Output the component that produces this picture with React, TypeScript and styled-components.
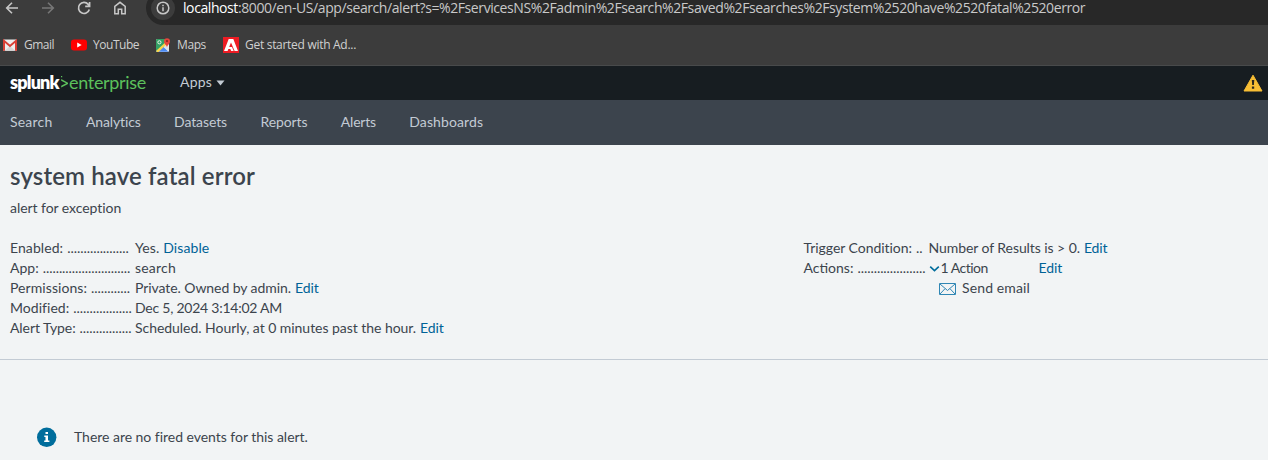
import React from 'react';
import styled, { createGlobalStyle } from 'styled-components';

const GlobalStyle = createGlobalStyle`
  * { box-sizing: border-box; }
  body {
    margin: 0;
    background: #f2f4f5;
    color: #3c444d;
    font: 14px/20px Lato, sans-serif;
  }
`;

/* Text with its own tracking, in hundredths of a pixel */
const Text = styled.span<{ $track?: number }>`
  letter-spacing: ${(p) => (p.$track ?? 0) / 100}px;
  white-space: pre;
`;

/* Header text sits slightly above the optical centre of its bar */
const RaisedText = styled(Text)`
  padding-bottom: 2px;
`;

const Page = styled.div`
  width: 1268px;
  height: 460px;
  overflow: hidden;
`;

/* Browser chrome */
const BrowserBar = styled.div`
  height: 66px;
  background: #3c3c3c;
  border-bottom: 1px solid #484a4b;
  font-family: 'Open Sans', sans-serif;
`;

const Toolbar = styled.div`
  display: flex;
  align-items: flex-end;
  height: 25px;
`;

const ToolButtons = styled.div`
  display: flex;
  flex: none;
  align-items: center;
  gap: 20px;
  width: 146px;
  height: 34px;
  padding-left: 4px;
`;

const AddressBar = styled.div`
  display: flex;
  flex: 1;
  align-items: center;
  height: 34px;
  padding-left: 5px;
  background: #282828;
  border-radius: 17px 0 0 17px;
`;

const SiteInfo = styled.div`
  display: flex;
  align-items: center;
  justify-content: center;
  flex: none;
  width: 24px;
  height: 24px;
  margin-right: 8px;
  background: #3c3c3c;
  border-radius: 50%;
`;

const Url = styled(Text)`
  color: #c9c9c9;
  font-size: 14px;
  line-height: 16px;
`;

const Host = styled.span`
  color: #fff;
`;

const Bookmarks = styled.div`
  display: flex;
  height: 40px;
  padding-left: 2px;
`;

const Bookmark = styled.div<{ $width: number }>`
  display: flex;
  align-items: center;
  flex: none;
  gap: 6px;
  width: ${(p) => p.$width}px;
  color: #d0d0d0;
  font-size: 12px;
`;

/* Splunk header */
const AppHeader = styled.header`
  display: flex;
  align-items: center;
  height: 34px;
  padding: 0 5px 0 10px;
  background: #171d21;
  color: #c3cbd4;
`;

const Logo = styled.div`
  display: flex;
  align-items: center;
  width: 170px;
  font-size: 18px;
  color: #5cc05c;
`;

const Brand = styled(RaisedText)`
  width: 50px;
  color: #fff;
  font-weight: 800;
`;

const AppsMenu = styled.div`
  display: flex;
  align-items: center;
  flex: 1;
  gap: 4px;
`;

const Nav = styled.nav`
  display: flex;
  align-items: center;
  gap: 33.4px;
  height: 45px;
  padding-left: 10px;
  background: #3c444d;
  color: #c3cbd4;
`;

/* Alert details */
const Summary = styled.section`
  height: 215px;
  padding: 16px 10px 0;
  border-bottom: 1px solid #c3cbd4;
`;

const Title = styled.h1`
  margin: 0;
  font-size: 24px;
  font-weight: 600;
  line-height: 30px;
  letter-spacing: 0.127px;
`;

const Description = styled.p`
  margin: 7px 0 20px;
  letter-spacing: -0.05px;
`;

const Columns = styled.div`
  display: grid;
  grid-template-columns: 793.5px 1fr;
`;

const Row = styled.div`
  display: flex;
  height: 20px;
  white-space: pre;
`;

const Label = styled.div`
  display: flex;
  flex: none;
  gap: 4px;
  width: 125px;
`;

const Dots = styled.span`
  letter-spacing: -0.06px;
`;

const Link = styled(Text)`
  margin-left: 4px;
  color: #006297;
`;

const ActionToggle = styled.div`
  display: flex;
  align-items: center;
  gap: 1px;
  width: 106px;

  svg {
    margin-top: 2px;
  }
`;

const ActionItem = styled.div`
  display: flex;
  align-items: center;
  gap: 6px;
  height: 20px;
  padding-left: 135.5px;

  svg {
    margin-top: 2px;
  }
`;

const EmptyMessage = styled.div`
  display: flex;
  align-items: center;
  gap: 17px;
  padding: 67px 0 0 37px;
`;

const strokeProps = { fill: 'none', stroke: '#c7c7c7', strokeWidth: 1.6 };

const BackIcon = () => (
  <svg width="16" height="16" viewBox="0 0 16 16" {...strokeProps}>
    <path d="M14 8H2.8M8 2.7 2.7 8 8 13.3" />
  </svg>
);

const ForwardIcon = () => (
  <svg width="16" height="16" viewBox="0 0 16 16" {...strokeProps} stroke="#777">
    <path d="M2 8h11.2M8 2.7 13.3 8 8 13.3" />
  </svg>
);

const ReloadIcon = () => (
  <svg width="16" height="16" viewBox="0 0 16 16" {...strokeProps} strokeWidth={1.7}>
    <path d="M13.3 9.5A5.5 5.5 0 1 1 12.2 4.4L13.5 6M13.6 2v4.4H9.2" />
  </svg>
);

const HomeIcon = () => (
  <svg width="16" height="16" viewBox="0 0 16 16" {...strokeProps} strokeWidth={1.5}>
    <path d="M2.8 6.3 8 2.3l5.2 4v7.500H9.700V9.200H6.300v4.600H2.800z" />
  </svg>
);

const SiteInfoIcon = () => (
  <svg width="14" height="14" viewBox="0 0 14 14" {...strokeProps} strokeWidth={1.5}>
    <circle cx="7" cy="7" r="5.8" />
    <path d="M7 6.3v4M7 3.7v1.500" />
  </svg>
);

const GmailIcon = () => (
  <svg width="16" height="16" viewBox="0 0 16 16">
    <rect x="1" y="2.5" width="14" height="11.2" rx="1" fill="#eee" />
    <path d="M3 13.7 8 9l5 4.7z" fill="#d6d6d6" />
    <path d="M2 13.7V3.8l6 5.1 6-5.1v9.9" fill="none" stroke="#d93f35" strokeWidth="2" />
  </svg>
);

const YouTubeIcon = () => (
  <svg width="16" height="16" viewBox="0 0 16 16">
    <rect y="2.4" width="16" height="11.2" rx="3" fill="#f00" />
    <path d="m6.2 5.4 4.5 2.6-4.5 2.6z" fill="#fff" />
  </svg>
);

const MapsIcon = () => (
  <svg width="16" height="16" viewBox="0 0 16 16">
    <rect x="1" y="2" width="13" height="13" rx="1.5" fill="#e8eaed" />
    <path d="M1 3.5C1 2.7 1.7 2 2.5 2H10l1 4-9.6 8.5-.4-1z" fill="#34a064" />
    <path d="m2 14.8 6-5.4 5.5 5.4z" fill="#4a89f3" />
    <path d="m8 9.2 2.4-2.3L14 11v3z" fill="#dfe2e5" />
    <path d="m1.2 13.8 9-8.2 1.4 1.6-8 7.7H2z" fill="#f8d34a" />
    <circle cx="4.4" cy="5.3" r="1.6" fill="none" stroke="#e8f5e9" />
    <path d="M12 10.3c-.4-2.4-3-3.2-3-6a3 3 0 0 1 6 0c0 2.8-2.6 3.6-3 6z" fill="#e5453b" />
    <circle cx="12" cy="4.1" r="1.1" fill="#8c251f" />
  </svg>
);

const AdobeIcon = () => (
  <svg width="16" height="16" viewBox="0 0 16 16">
    <path d="M0 0h16v16H0z" fill="#ed1c24" />
    <path d="M5.700 2h4.600L15 14h-3.400L8 5.600 6.200 9.900H9l1.700 4.100H8.200l-.9-2H5.400l-.8 2H1z" fill="#fff" />
  </svg>
);

const PromptIcon = () => (
  <svg width="9" height="16" viewBox="0 0 9 16">
    <path d="M1.2 4 8 7.700v1.200L1.200 12.500v-1.700l4.900-2.500L1.200 5.800z" fill="#5cc05c" />
    <path d="M1 1h1.200v1.200H1z" fill="#5cc05c" />
  </svg>
);

const CaretIcon = () => (
  <svg width="9" height="6" viewBox="0 0 9 6">
    <path d="M.5.5h8l-4 5z" fill="#c3cbd4" />
  </svg>
);

const WarningIcon = () => (
  <svg width="20" height="18" viewBox="0 0 20 18">
    <path d="M10 1.2 19 17H1z" fill="#f8be34" stroke="#f8be34" strokeLinejoin="round" />
    <path d="M8.8 6h2.500l-.4 5H9.200zM8.900 12.500h2.300v2.200H8.900z" fill="#2b271d" />
  </svg>
);

const ChevronIcon = () => (
  <svg width="11" height="8" viewBox="0 0 11 8" fill="none" stroke="#006d9c" strokeWidth="1.6">
    <path d="m1.200 1.600 4.300 4.100 4.300-4.100" />
  </svg>
);

const MailIcon = () => (
  <svg width="17" height="12" viewBox="0 0 17 12" fill="none" stroke="#2f86b4">
    <path d="M.5.5h16v11H.5zM1 1l7.500 6.500L16 1M1 11l5-5.300M16 11l-5-5.300" />
  </svg>
);

const InfoIcon = () => (
  <svg width="20" height="20" viewBox="0 0 20 20">
    <circle cx="9.700" cy="10.300" r="9.700" fill="#006d9c" />
    <path d="M8.500 5H11v2.100H8.500zM7.300 8.400H11v5h1.400v1.500H7.200v-1.500h1.300V9.900H7.300z" fill="#fff" />
  </svg>
);

const navItems = [
  { name: 'Search', track: 21 },
  { name: 'Analytics', track: -12 },
  { name: 'Datasets', track: -10 },
  { name: 'Reports', track: -10 },
  { name: 'Alerts', track: -22 },
  { name: 'Dashboards', track: 12 },
];

const details = [
  { label: 'Enabled:', labelTrack: 8, dots: 19, value: 'Yes.', track: 8, link: 'Disable', linkTrack: 8 },
  { label: 'App:', labelTrack: 0, dots: 27, value: 'search', track: 20 },
  { label: 'Permissions:', labelTrack: 7, dots: 12, value: 'Private. Owned by admin.', track: -7, link: 'Edit', linkTrack: -12 },
  { label: 'Modified:', labelTrack: 4, dots: 18, value: 'Dec 5, 2024 3:14:02 AM', track: -24 },
  { label: 'Alert Type:', labelTrack: -8, dots: 16, value: 'Scheduled. Hourly, at 0 minutes past the hour.', track: -4, link: 'Edit', linkTrack: -12 },
];

export default function App() {
  return (
    <Page>
      <GlobalStyle />
      <BrowserBar>
        <Toolbar>
          <ToolButtons>
            <BackIcon />
            <ForwardIcon />
            <ReloadIcon />
            <HomeIcon />
          </ToolButtons>
          <AddressBar>
            <SiteInfo>
              <SiteInfoIcon />
            </SiteInfo>
            <Url $track={-41.3}>
              <Host>localhost</Host>
              :8000/en-US/app/search/alert?s=%2FservicesNS%2Fadmin%2Fsearch%2Fsaved%2Fsearches%2Fsystem%2520have%2520fatal%2520error
            </Url>
          </AddressBar>
        </Toolbar>
        <Bookmarks>
          <Bookmark $width={69}>
            <GmailIcon />
            <Text $track={-51}>Gmail</Text>
          </Bookmark>
          <Bookmark $width={84}>
            <YouTubeIcon />
            <Text $track={-47}>YouTube</Text>
          </Bookmark>
          <Bookmark $width={68}>
            <MapsIcon />
            <Text $track={-40}>Maps</Text>
          </Bookmark>
          <Bookmark $width={140}>
            <AdobeIcon />
            <Text $track={-29}>Get started with Ad...</Text>
          </Bookmark>
        </Bookmarks>
      </BrowserBar>
      <AppHeader>
        <Logo>
          <Brand $track={-80}>splunk</Brand>
          <PromptIcon />
          <RaisedText $track={-31}>enterprise</RaisedText>
        </Logo>
        <AppsMenu>
          <RaisedText $track={20}>Apps</RaisedText>
          <CaretIcon />
        </AppsMenu>
        <WarningIcon />
      </AppHeader>
      <Nav>
        {navItems.map((item) => (
          <RaisedText key={item.name} $track={item.track}>
            {item.name}
          </RaisedText>
        ))}
      </Nav>
      <Summary>
        <Title>system have fatal error</Title>
        <Description>alert for exception</Description>
        <Columns>
          <div>
            {details.map((d) => (
              <Row key={d.label}>
                <Label>
                  <Text $track={d.labelTrack}>{d.label}</Text>
                  <Dots>{'.'.repeat(d.dots)}</Dots>
                </Label>
                <Text $track={d.track}>{d.value}</Text>
                {d.link && <Link $track={d.linkTrack}>{d.link}</Link>}
              </Row>
            ))}
          </div>
          <div>
            <Row>
              <Label>
                <Text $track={-4}>Trigger Condition:</Text>
                <Dots>{'.'.repeat(2)}</Dots>
              </Label>
              <Text $track={-7}>{'Number of Results is > 0.'}</Text>
              <Link $track={-12}>Edit</Link>
            </Row>
            <Row>
              <Label>
                <Text>Actions:</Text>
                <Dots>{'.'.repeat(21)}</Dots>
              </Label>
              <ActionToggle>
                <ChevronIcon />
                <Text $track={-50}>1 Action</Text>
              </ActionToggle>
              <Link $track={-12}>Edit</Link>
            </Row>
            <ActionItem>
              <MailIcon />
              <Text $track={13}>Send email</Text>
            </ActionItem>
          </div>
        </Columns>
      </Summary>
      <EmptyMessage>
        <InfoIcon />
        <Text $track={-3}>There are no fired events for this alert.</Text>
      </EmptyMessage>
    </Page>
  );
}
